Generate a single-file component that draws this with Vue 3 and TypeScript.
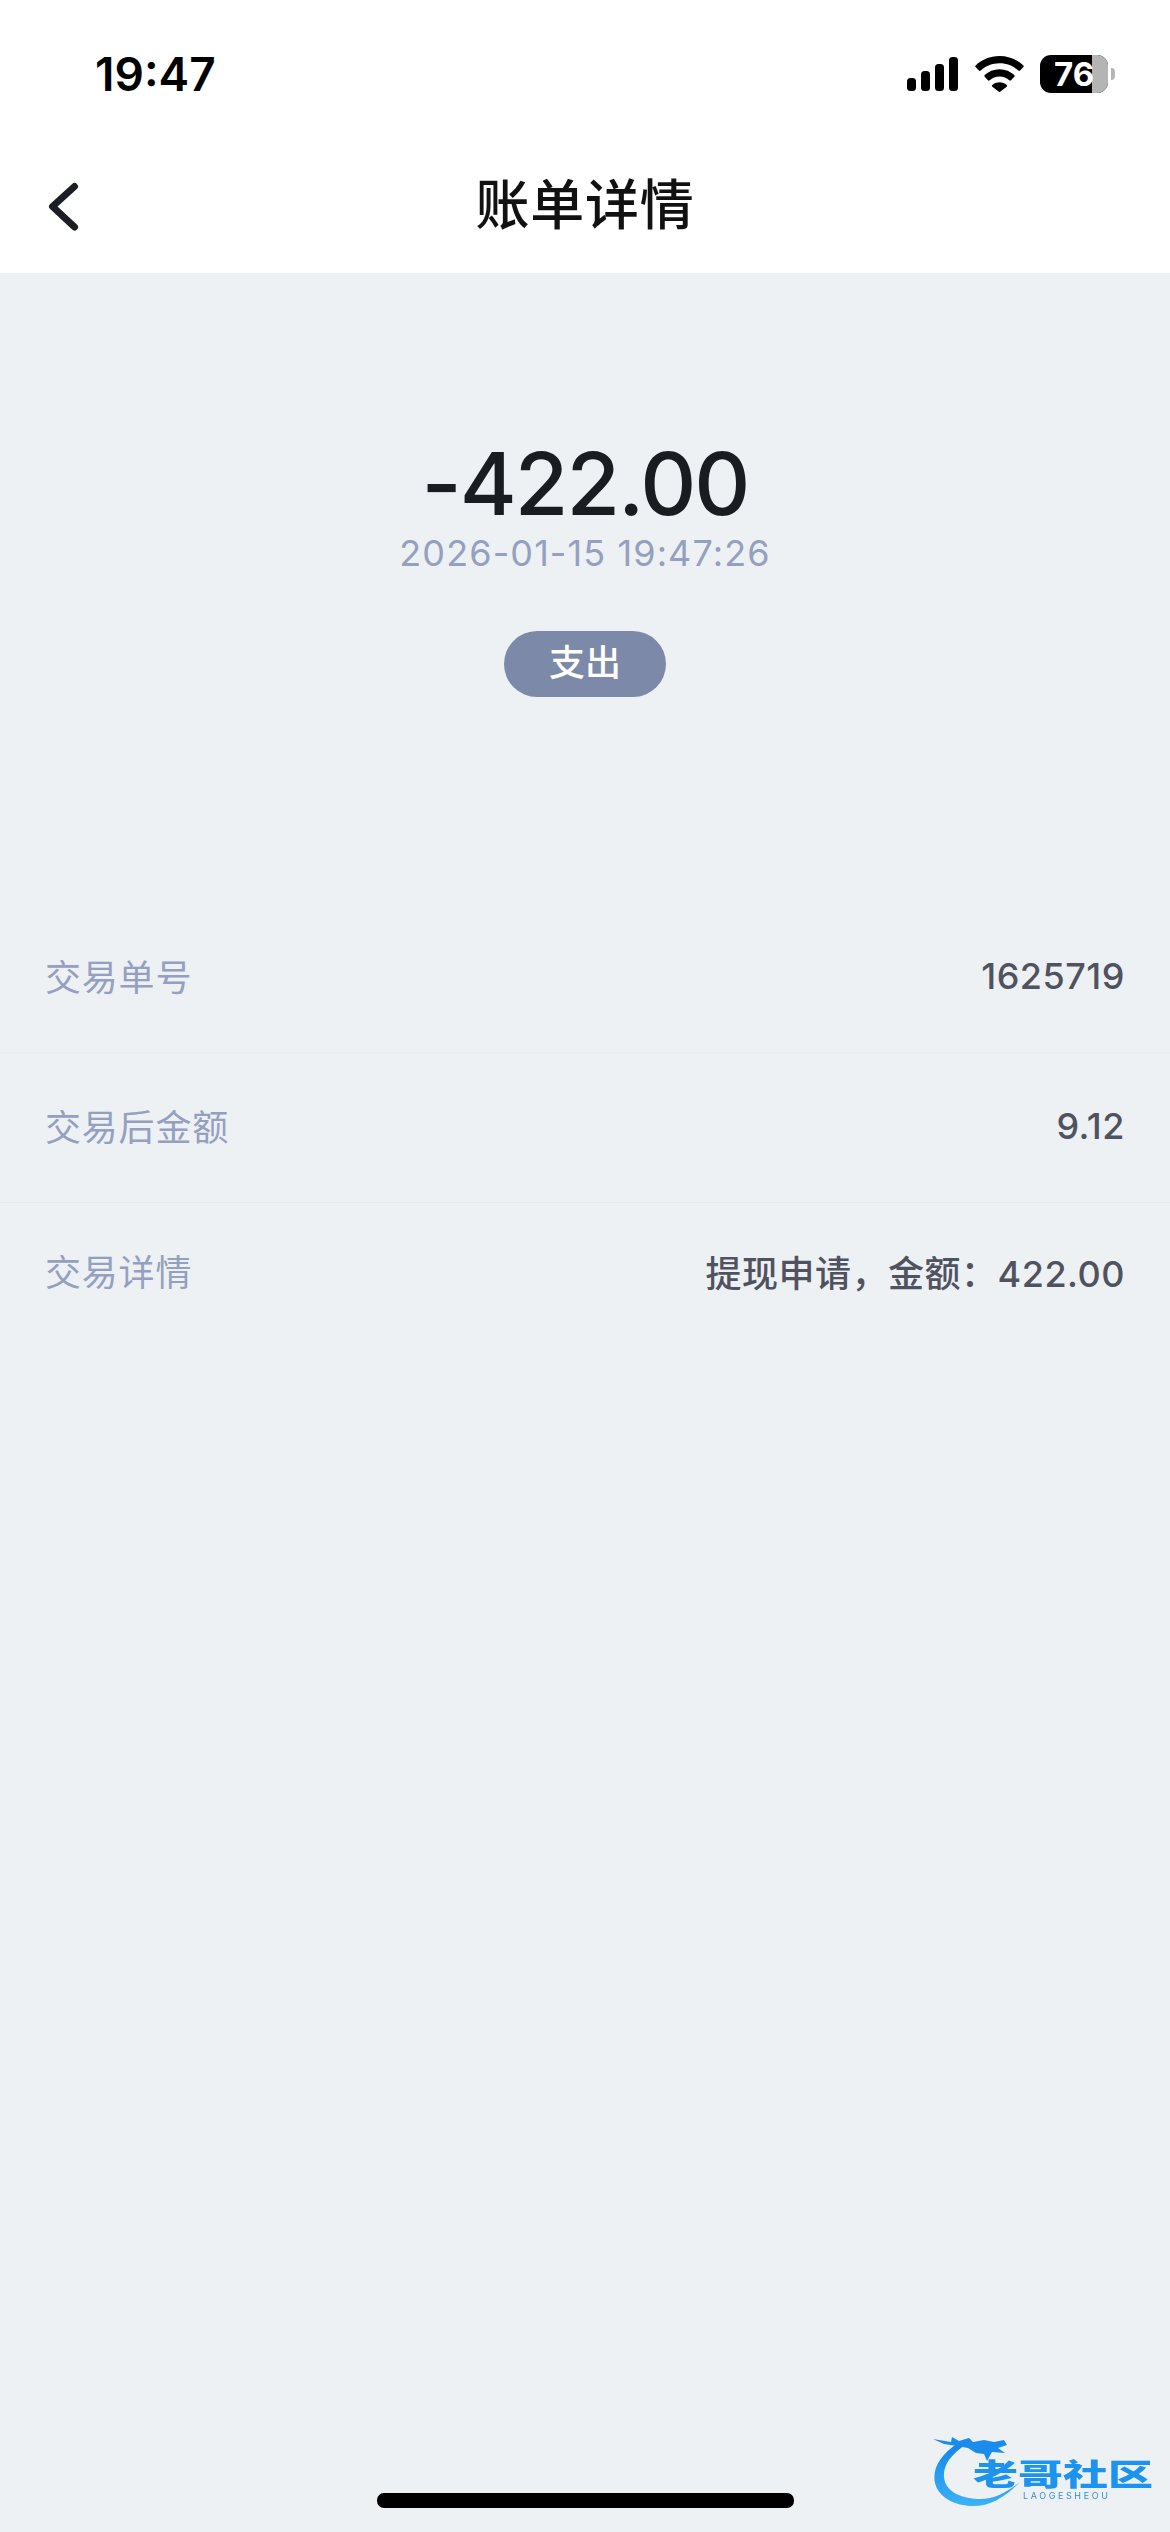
<template>
  <div class="page">
    <header class="top">
      <div class="status">
        <span class="time">19:47</span>
        <div class="status-icons">
          <svg class="signal" width="51" height="34" viewBox="0 0 51 34">
            <rect x="0" y="21" width="9" height="13" rx="3.5" />
            <rect x="14" y="14" width="9" height="20" rx="3.5" />
            <rect x="28" y="7" width="9" height="27" rx="3.5" />
            <rect x="42" y="0" width="9" height="34" rx="3.5" />
          </svg>
          <svg class="wifi" width="49" height="36" viewBox="0 0 49 36">
            <path d="M24.5 0C15 0 6.8 3.6 0.6 9.4c-.5.5-.5 1.2 0 1.700l3.300 3.500c.5.500 1.200.500 1.700 0C10.600 10 17.200 7.300 24.500 7.300S38.400 10 43.400 14.600c.5.500 1.200.500 1.700 0l3.300-3.500c.5-.5.5-1.200 0-1.700C42.200 3.600 34 0 24.500 0Z" />
            <path d="M24.500 13.300c-5.800 0-11 2.200-14.800 5.800-.5.500-.5 1.200 0 1.700l3.300 3.500c.5.500 1.200.500 1.700 0 2.600-2.400 6-3.800 9.800-3.800s7.200 1.400 9.800 3.800c.5.500 1.200.500 1.700 0l3.300-3.500c.5-.5.5-1.200 0-1.700-3.800-3.600-9-5.800-14.800-5.800Z" />
            <path d="M24.500 26.300c-2.800 0-5.300 1-7.200 2.700-.5.500-.5 1.200 0 1.700l6.300 4.900c.5.400 1.300.400 1.800 0l6.300-4.900c.5-.5.5-1.200 0-1.700-1.900-1.700-4.400-2.700-7.200-2.700Z" />
          </svg>
          <div class="battery">
            <div class="battery-body">
              <div class="battery-empty"></div>
              <span class="battery-num">76</span>
            </div>
            <div class="battery-tip"></div>
          </div>
        </div>
      </div>
      <nav class="nav">
        <svg class="back" width="32" height="50" viewBox="0 0 32 50">
          <path d="M27.500 4.500 5.500 24.500 27.500 45" fill="none" stroke="#1b1f24" stroke-width="7" stroke-linecap="round" stroke-linejoin="round" />
        </svg>
        <h1 class="title">账单详情</h1>
      </nav>
    </header>

    <main class="content">
      <section class="summary">
        <div class="amount">-422.00</div>
        <div class="date">2026-01-15 19:47:26</div>
        <div class="tag">支出</div>
      </section>

      <section class="rows">
        <div v-for="row in rows" :key="row.label" class="row">
          <span class="label">{{ row.label }}</span>
          <span class="value">{{ row.value }}</span>
        </div>
      </section>

      <div class="home-bar"></div>
    </main>

    <div class="logo">
      <svg class="dragon" width="92" height="76" viewBox="0 0 92 76">
        <defs>
          <linearGradient id="arcFill" x1="0" y1="0" x2="0" y2="1">
            <stop offset="0" stop-color="#1185ea" />
            <stop offset="1" stop-color="#3cb2f6" />
          </linearGradient>
        </defs>
        <path d="M26 12C8 24 0 38 3 52c3 14 20 23 38 23 16 0 30-7 47-24-15 12-29 18-43 17C28 67 13 60 12 46 11 34 19 24 33 14Z" fill="url(#arcFill)" />
        <path d="M1 8 19 11 20 6 27 10 37 7 41 11 52 9 62 11 72 9 75 14 66 17 73 22 60 21 55 30 52 23 44 22 36 17 25 15 12 13Z" fill="#1a8cec" />
      </svg>
      <span class="logo-cn">老哥社区</span>
      <span class="logo-en">LAOGESHEOU</span>
    </div>
  </div>
</template>

<script setup lang="ts">
interface Row {
  label: string
  value: string
}

const rows: Row[] = [
  { label: '交易单号', value: '1625719' },
  { label: '交易后金额', value: '9.12' },
  { label: '交易详情', value: '提现申请，金额：422.00' },
]
</script>

<style>
html,
body {
  margin: 0;
  background: #edf1f4;
}
</style>

<style scoped>
.page {
  position: relative;
  width: 1170px;
  height: 2532px;
  display: flex;
  flex-direction: column;
  overflow: hidden;
  background: #edf1f4;
  font-family: Inter, "Noto Sans CJK SC", sans-serif;
}
.top {
  height: 273px;
  background: #fff;
  flex-shrink: 0;
}
.status {
  height: 148px;
  box-sizing: border-box;
  padding: 55px 55px 0 95px;
  display: flex;
  justify-content: space-between;
  align-items: flex-start;
}
.time {
  font-size: 46px;
  line-height: 38px;
  font-weight: 600;
  color: #000;
}
.status-icons {
  display: flex;
  align-items: center;
  gap: 17px;
}
.signal,
.wifi {
  fill: #000;
}
.battery {
  display: flex;
  align-items: center;
  gap: 3px;
  margin-left: -1px;
}
.battery-body {
  position: relative;
  width: 68px;
  height: 38px;
  border-radius: 11px;
  background: #000;
  overflow: hidden;
}
.battery-empty {
  position: absolute;
  top: 0;
  right: 0;
  bottom: 0;
  width: 16px;
  background: #b4b4b4;
}
.battery-num {
  position: absolute;
  left: 14px;
  top: 0;
  line-height: 38px;
  font-size: 33px;
  font-weight: 700;
  color: #fff;
}
.battery-tip {
  width: 4px;
  height: 12px;
  border-radius: 0 6px 6px 0;
  background: #b4b4b4;
}
.nav {
  position: relative;
  height: 125px;
  display: flex;
  align-items: center;
  justify-content: center;
}
.back {
  position: absolute;
  left: 47px;
  top: 34px;
}
.title {
  margin: 0;
  font-size: 54px;
  letter-spacing: 0.8px;
  line-height: 116px;
  font-weight: 500;
  color: #111;
  padding-bottom: 9px;
}
.content {
  flex: 1;
  display: flex;
  flex-direction: column;
}
.summary {
  display: flex;
  flex-direction: column;
  align-items: center;
  padding-top: 161px;
}
.amount {
  font-size: 87px;
  letter-spacing: -2px;
  line-height: 100px;
  font-weight: 500;
  color: #191d21;
}
.date {
  font-size: 36px;
  letter-spacing: 1.1px;
  line-height: 44px;
  color: #95a0c0;
  margin-top: -3px;
}
.tag {
  margin-top: 56px;
  width: 162px;
  height: 66px;
  border-radius: 33px;
  background: #7c89a8;
  color: #fff;
  font-size: 36px;
  font-weight: 500;
  line-height: 64px;
  text-align: center;
}
.rows {
  margin-top: 206px;
}
.row {
  height: 150px;
  box-sizing: border-box;
  padding: 0 45px 5px 45px;
  display: flex;
  justify-content: space-between;
  align-items: center;
  border-bottom: 1px solid #e8e9ec;
  font-size: 36px;
  letter-spacing: 0.8px;
}
.row:last-child {
  height: 138px;
  border-bottom: none;
}
.label {
  color: #95a0c0;
}
.value {
  color: #50535f;
  font-weight: 500;
  letter-spacing: 0.5px;
  padding-top: 2px;
}
.home-bar {
  width: 417px;
  height: 15px;
  border-radius: 7px;
  background: #000;
  margin: auto auto 24px;
}
.logo {
  position: absolute;
  left: 932px;
  top: 2431px;
  width: 222px;
  height: 76px;
  filter: blur(0.6px);
}
.dragon {
  position: absolute;
  left: 0;
  top: 0;
}
.logo-cn {
  position: absolute;
  left: 41px;
  top: 28px;
  font-size: 30px;
  line-height: 30px;
  font-weight: 900;
  white-space: nowrap;
  color: #1c93ee;
  transform: scaleX(1.5);
  transform-origin: left center;
}
.logo-en {
  position: absolute;
  left: 91px;
  top: 60px;
  font-size: 9px;
  line-height: 10px;
  letter-spacing: 2.6px;
  color: #2f8fe0;
  white-space: nowrap;
}
</style>
